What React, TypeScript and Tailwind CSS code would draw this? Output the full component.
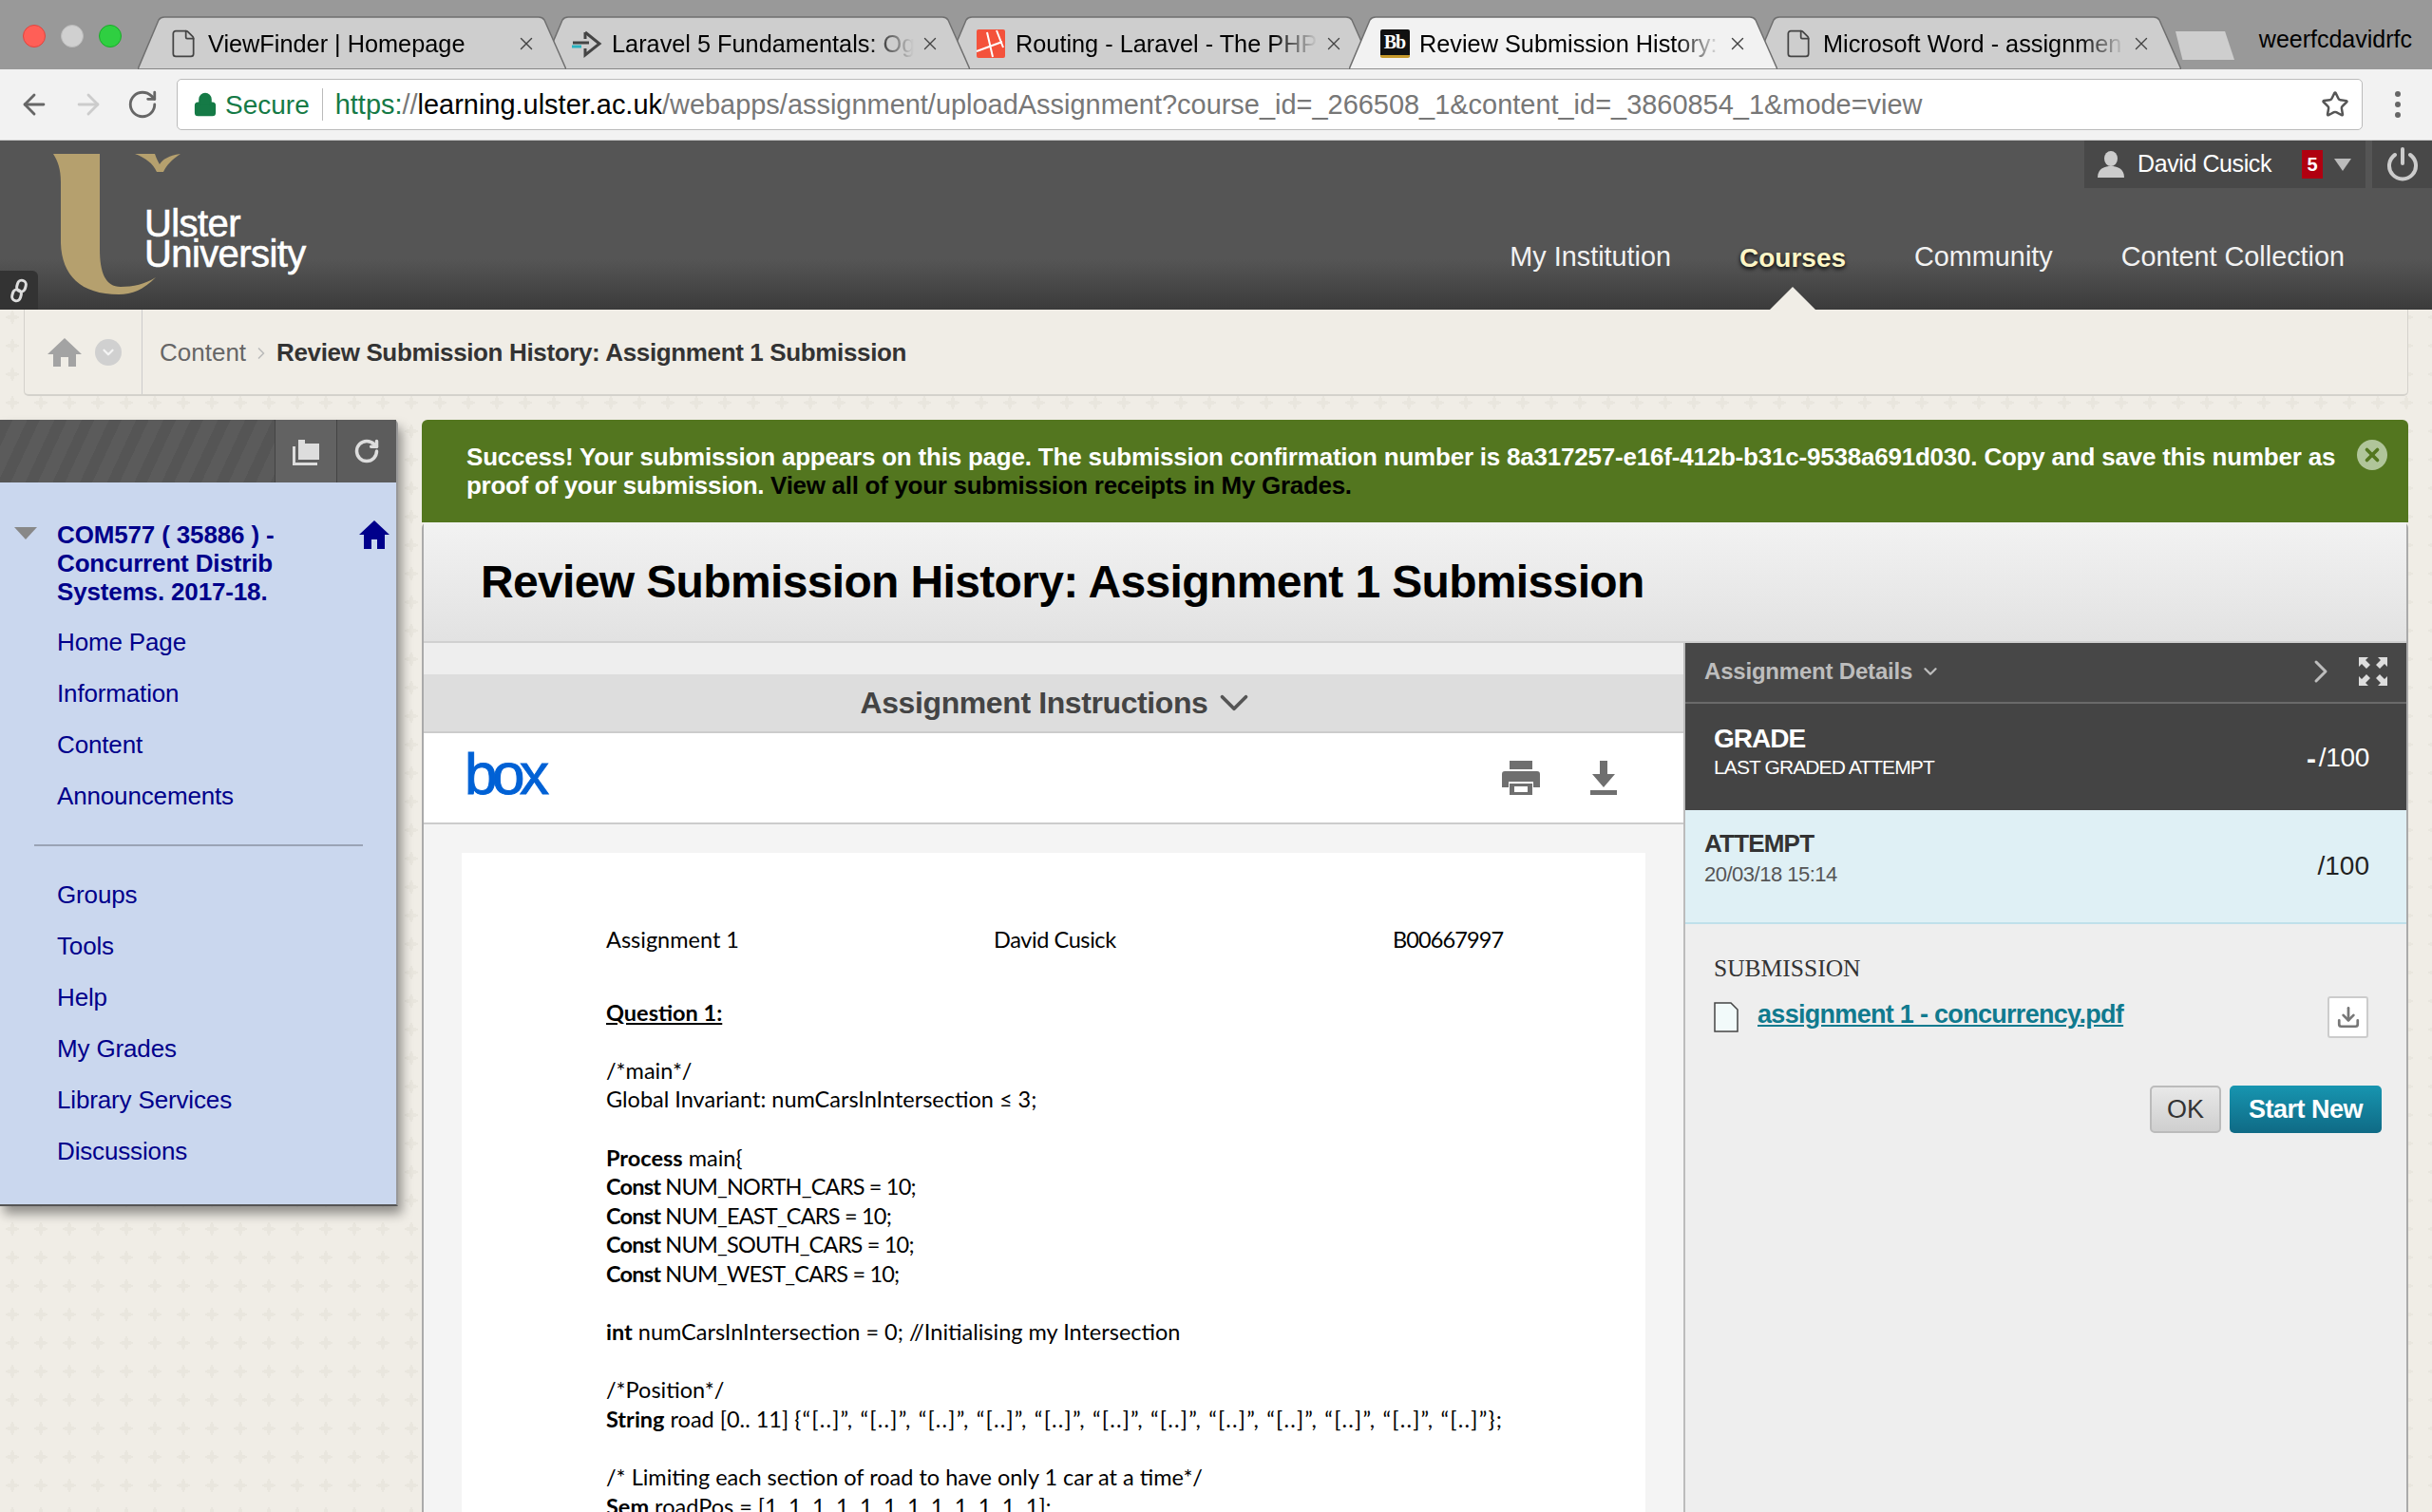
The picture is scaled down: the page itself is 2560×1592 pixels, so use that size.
import React from 'react';
import { ArrowLeft, ArrowRight, RotateCw, Star, File, X, ChevronDown, ChevronRight, Download, Lock } from 'lucide-react';

const TABS = [
  { title: 'ViewFinder | Homepage', z: 'z-40', icon: 'doc' },
  { title: 'Laravel 5 Fundamentals: Og', z: 'z-30', icon: 'lara' },
  { title: 'Routing - Laravel - The PHP', z: 'z-20', icon: 'laravel' },
  { title: 'Review Submission History:', z: 'z-50', icon: 'bb', active: true },
  { title: 'Microsoft Word - assignmen', z: 'z-10', icon: 'doc' },
];

const NAV_TOP = ['Home Page', 'Information', 'Content', 'Announcements'];
const NAV_BOTTOM = ['Groups', 'Tools', 'Help', 'My Grades', 'Library Services', 'Discussions'];
const NAV_MAIN = ['My Institution', 'Courses', 'Community', 'Content Collection'];

const TabIcon: React.FC<{ kind: string }> = ({ kind }) => {
  if (kind === 'doc') return <File size={32} strokeWidth={1.3} className="text-[#444]" />;
  if (kind === 'lara')
    return (
      <svg width="32" height="32" viewBox="0 0 32 32">
        <path d="M14 4 L29 16 L14 28 L14 21" fill="none" stroke="#444" strokeWidth="3" />
        <path d="M14 11 V4" stroke="#444" strokeWidth="3" />
        <path d="M1 15 H18" stroke="#444" strokeWidth="3" />
        <path d="M0 19 H10" stroke="#2bb3c0" strokeWidth="3" />
      </svg>
    );
  if (kind === 'laravel')
    return (
      <svg width="32" height="32" viewBox="0 0 32 32">
        <rect x="1" y="1" width="30" height="30" rx="2" fill="#f4523b" />
        <path d="M1 24 L28 14 M12 4 L18 30 M22 2 L29 20" stroke="#fff" strokeWidth="2" fill="none" />
      </svg>
    );
  return (
    <span className="flex h-[30px] w-[31px] items-center justify-center rounded-[2px] border-b-[3px] border-[#c79a2c] bg-[#111] font-['Liberation_Serif',serif] text-[20px] font-bold leading-none tracking-[-1px] text-white">
      Bb
    </span>
  );
};

const Tab: React.FC<{ title: string; z: string; icon: string; active?: boolean }> = ({ title, z, icon, active }) => (
  <div className={`relative -mr-[26px] h-[56px] w-[451px] shrink-0 ${z}`}>
    <svg className="absolute inset-0 h-full w-full" viewBox="0 0 451 56" preserveAspectRatio="none">
      <path
        d="M0 56 L22 4 Q24 1 28 1 L422 1 Q426 1 428 4 L451 56 Z"
        fill={active ? '#f2f2f2' : '#cecece'}
        stroke="#6f6f6f"
        strokeWidth="1.5"
      />
    </svg>
    <div className="relative flex h-full items-center pl-[32px] pr-[31px] pt-[1px]">
      <span className="flex w-[32px] shrink-0 justify-center"><TabIcon kind={icon} /></span>
      <span className="ml-[10px] flex-1 overflow-hidden whitespace-nowrap text-[25.3px] leading-[32px] text-black [mask-image:linear-gradient(to_right,black_85%,transparent)]">
        {title}
      </span>
      <X size={22} strokeWidth={1.5} className="ml-[6px] shrink-0 text-[#444]" />
    </div>
  </div>
);

const App: React.FC = () => {
  return (
    <div className="flex h-[1592px] w-full flex-col overflow-hidden bg-[#f0ede6] bg-[radial-gradient(7px_2px_at_center,#e9e6de_99%,transparent),radial-gradient(2px_7px_at_center,#e9e6de_99%,transparent)] font-['Liberation_Sans',Arial,sans-serif] [background-position:-2px_-11px] [background-size:30px_30px]">
      {/* Browser tab strip */}
      <div className="relative flex h-[73px] shrink-0 items-end bg-[#999] pl-[145px]">
        <div className="absolute left-[24px] top-[26px] flex gap-[16px]">
          <span className="h-[24px] w-[24px] rounded-full border border-[#e0443e] bg-[#ff5f57]" />
          <span className="h-[24px] w-[24px] rounded-full border border-[#bbb] bg-[#d0d0d0]" />
          <span className="h-[24px] w-[24px] rounded-full border border-[#1aab29] bg-[#2fcf41]" />
        </div>
        {TABS.map((t) => (
          <Tab key={t.title} {...t} />
        ))}
        <div className="z-0 mb-[10px] ml-[20px] h-[30px] w-[62px] shrink-0 [clip-path:polygon(0_0,84%_0,100%_100%,12%_100%)] bg-[#cecece]" />
        <span className="absolute right-[21px] top-[25px] text-[25px] leading-[32px] text-black">weerfcdavidrfc</span>
      </div>

      {/* Browser toolbar */}
      <div className="flex h-[75px] shrink-0 items-center border-b border-[#ccc] bg-[#f2f2f2]">
        <div className="flex w-[186px] items-center justify-around pl-[8px] pr-[8px]">
          <ArrowLeft size={34} strokeWidth={2} className="text-[#666]" />
          <ArrowRight size={34} strokeWidth={2} className="text-[#ccc]" />
          <RotateCw size={34} strokeWidth={2} className="text-[#666]" />
        </div>
        <div className="flex h-[54px] w-[2301px] items-center rounded-[5px] border border-[#bbb] bg-white pl-[16px] pr-[13px] text-[28px]">
          <Lock size={26} strokeWidth={2.5} fill="#157a46" className="text-[#157a46]" />
          <span className="ml-[8px] pt-[2px] text-[#157a46]">Secure</span>
          <span className="mx-[13px] h-[34px] w-px bg-[#bbb]" />
          <span className="whitespace-nowrap pt-[2px] text-[28.94px] text-[#777]">
            <span className="text-[#157a46]">https:</span>//<span className="text-black">learning.ulster.ac.uk</span>/webapps/assignment/uploadAssignment?course_id=_266508_1&amp;content_id=_3860854_1&amp;mode=view
          </span>
          <Star size={30} strokeWidth={2} className="ml-auto text-[#555]" />
        </div>
        <div className="ml-[34px] flex flex-col gap-[5px]">
          <span className="h-[6px] w-[6px] rounded-full bg-[#666]" />
          <span className="h-[6px] w-[6px] rounded-full bg-[#666]" />
          <span className="h-[6px] w-[6px] rounded-full bg-[#666]" />
        </div>
      </div>

      {/* Site header */}
      <div className="relative flex h-[178px] shrink-0 justify-between bg-[linear-gradient(#555_0%,#555_70%,#3b3b3b_100%)]">
        <div className="relative ml-[55px] mt-[14px] h-[148px] w-[270px]">
          <svg width="136" height="148" viewBox="0 0 136 148">
            <path d="M1 0 H50 L50 100 C50 125 56 140 72 140 C85 140 98 137 109 130 C96 143 84 148 70 148 C30 148 10 128 9 94 L9 30 C9 16 6 8 1 0 Z" fill="#b5a06e" />
            <path d="M87 0 H108 C110 6 112 9 113 11 C116 6 122 2 135 0 C126 6 120 12 117 19 H110 C106 10 98 4 87 0 Z" fill="#b5a06e" />
          </svg>
          <div className="absolute left-[97px] top-[57px] text-[40px] font-normal leading-[32px] tracking-[-0.6px] text-white [-webkit-text-stroke:0.6px_white]">
            Ulster
            <br />
            University
          </div>
        </div>
        <div className="absolute bottom-0 left-0 flex h-[41px] w-[40px] items-center justify-center rounded-tr-[6px] bg-[#333]">
          <svg width="20" height="26" viewBox="0 0 20 26" fill="none" stroke="#ddd" strokeWidth="3">
            <rect x="8" y="2" width="9" height="12" rx="4.5" transform="rotate(15 12 8)" />
            <rect x="3" y="12" width="9" height="12" rx="4.5" transform="rotate(15 8 18)" />
          </svg>
        </div>

        <div className="flex flex-col items-end">
          <div className="flex h-[50px] items-stretch gap-[7px]">
            <div className="flex w-[296px] items-center bg-[#484848] pl-[14px]">
              <svg width="28" height="28" viewBox="0 0 28 28" fill="#ccc">
                <ellipse cx="14" cy="8" rx="7" ry="8" />
                <path d="M0 28 C0 18 8 16 14 16 C20 16 28 18 28 28 Z" />
              </svg>
              <span className="ml-[14px] text-[25px] tracking-[-0.4px] text-white">David Cusick</span>
              <span className="ml-[32px] flex h-[30px] w-[22px] items-center justify-center bg-[#b00010] text-[20px] font-bold text-white">5</span>
              <span className="ml-[12px] h-0 w-0 border-x-[9px] border-t-[13px] border-x-transparent border-t-[#bbb]" />
            </div>
            <div className="flex w-[63px] items-center justify-center bg-[#484848]">
              <svg width="34" height="36" viewBox="0 0 34 36" fill="none" stroke="#ccc" strokeWidth="4" strokeLinecap="round">
                <path d="M17 2 V17" />
                <path d="M9 8 A14 14 0 1 0 25 8" />
              </svg>
            </div>
          </div>
          <nav className="mr-[92px] mt-[52px] flex h-[76px] items-start gap-[72px] text-[28.8px] leading-[40px]">
            {NAV_MAIN.map((item) =>
              item === 'Courses' ? (
                <div key={item} className="relative h-full">
                  <span className="block pt-[2px] text-[28px] font-bold text-[#fdf6c6] [text-shadow:0_2px_4px_#000]">{item}</span>
                  <span className="absolute bottom-0 left-1/2 h-0 w-0 -translate-x-1/2 border-x-[24px] border-b-[24px] border-x-transparent border-b-[#f0ede6]" />
                </div>
              ) : (
                <span key={item} className="text-[#f2f2f2]">{item}</span>
              ),
            )}
          </nav>
        </div>
      </div>

      {/* Breadcrumbs */}
      <div className="mx-[25px] flex h-[91px] shrink-0 items-stretch rounded-b-[5px] border-x border-b-2 border-[#d4d2cc] bg-[#f0ede6]">
        <div className="flex w-[124px] items-center gap-[14px] border-r border-[#ccc] pl-[24px]">
          <svg width="36" height="30" viewBox="0 0 36 30" fill="#a3a3a3">
            <path d="M18 0 L36 17 H30 V30 H22 V20 H14 V30 H6 V17 H0 Z" />
          </svg>
          <span className="flex h-[28px] w-[28px] items-center justify-center rounded-full bg-[#d0d0d0]">
            <ChevronDown size={18} strokeWidth={3} className="text-[#f4f4f4]" />
          </span>
        </div>
        <div className="flex items-center pl-[18px] pt-[2px] text-[26px]">
          <span className="text-[#666]">Content</span>
          <ChevronRight size={20} className="mx-[6px] text-[#bbb]" />
          <span className="font-bold tracking-[-0.36px] text-[#333]">Review Submission History: Assignment 1 Submission</span>
        </div>
      </div>

      <div className="mt-[25px] flex min-h-0 flex-1 items-start gap-[25px] pr-[25px]">
        {/* Course menu */}
        <aside className="w-[419px] shrink-0 rounded-tr-[5px] border-b-2 border-r-2 border-b-[#555] border-r-[#999] bg-[#cad7ee] text-[26px] tracking-[-0.15px] text-[#00008b] shadow-[4px_8px_12px_rgba(0,0,0,0.4)]">
          <div className="flex h-[66px] rounded-tr-[5px] bg-[#555]">
            <div className="flex-1 bg-[repeating-linear-gradient(115deg,#555_0,#555_12px,#5b5b5b_12px,#5b5b5b_26px)]" />
            <button className="flex w-[65px] items-center justify-center border-l border-[#444] bg-[#626262]">
              <svg width="32" height="30" viewBox="0 0 32 30" fill="#ddd">
                <path d="M8 3 H15 V7 H30 V24 H8 Z" />
                <path d="M2 10 H5 V27 H28 V30 H2 Z" />
              </svg>
            </button>
            <button className="flex w-[63px] items-center justify-center border-l border-[#444] bg-[#5c5c5c]">
              <RotateCw size={28} strokeWidth={3} className="text-[#ddd]" />
            </button>
          </div>
          <div className="relative pb-[29px] pl-[60px] pt-[40px]">
            <span className="absolute left-[15px] top-[47px] h-0 w-0 border-x-[12px] border-t-[13px] border-x-transparent border-t-[#888]" />
            <svg className="absolute right-[7px] top-[40px]" width="32" height="30" viewBox="0 0 32 30" fill="#00008b">
              <path d="M16 0 L32 15 H27 V30 H19 V20 H13 V30 H5 V15 H0 Z" />
            </svg>
            <h2 className="text-[26px] font-bold leading-[30px]">
              COM577 ( 35886 ) -<br />
              Concurrent Distrib<br />
              Systems. 2017-18.
            </h2>
            <ul className="mt-[11px]">
              {NAV_TOP.map((item) => (
                <li key={item} className="flex h-[54px] items-center">{item}</li>
              ))}
            </ul>
            <div className="-ml-[24px] mb-[24px] mr-[35px] mt-[24px] h-[2px] bg-[#9aa3b5]" />
            <ul>
              {NAV_BOTTOM.map((item) => (
                <li key={item} className="flex h-[54px] items-center">{item}</li>
              ))}
            </ul>
          </div>
        </aside>

        {/* Main content */}
        <main className="flex h-full min-w-0 flex-1 flex-col">
          <div className="relative h-[108px] shrink-0 rounded-t-[6px] bg-[#53761f] pl-[47px] pt-[24px] text-[26px] font-bold leading-[30px] tracking-[-0.21px] text-white">
            Success! Your submission appears on this page. The submission confirmation number is 8a317257-e16f-412b-b31c-9538a691d030. Copy and save this number as
            <br />
            <span className="tracking-[-0.3px]">proof of your submission. <span className="text-black">View all of your submission receipts in My Grades.</span></span>
            <span className="absolute right-[22px] top-[21px] flex h-[32px] w-[32px] items-center justify-center rounded-full bg-[#b0c59a]">
              <X size={22} strokeWidth={4} className="text-[#53761f]" />
            </span>
          </div>
          <div className="flex min-h-0 flex-1 flex-col rounded-t-[6px] border-x-2 border-[#aaa] bg-[#eee]">
            <div className="flex h-[127px] shrink-0 items-center border-b-2 border-[#d0d0d0] bg-[linear-gradient(#f2f2f2,#e2e2e2)] pl-[60px]">
              <h1 className="text-[48px] font-bold tracking-[-0.65px] text-black">Review Submission History: Assignment 1 Submission</h1>
            </div>
            <div className="flex min-h-0 flex-1">
              <section className="flex min-w-0 flex-1 flex-col bg-[#f4f4f4]">
                <div className="h-[33px] shrink-0 bg-[#eee]" />
                <div className="flex h-[62px] shrink-0 items-center justify-center gap-[3px] border-b-2 border-[#ccc] bg-[#ddd] pl-[12px] text-[32px] font-bold tracking-[-0.4px] text-[#444]">
                  Assignment Instructions
                  <ChevronDown size={50} strokeWidth={1.8} className="text-[#555]" />
                </div>
                <div className="flex h-[96px] shrink-0 items-center justify-between border-b-2 border-[#ccc] bg-white pl-[43px] pr-[69px]">
                  <span className="pb-[8px] text-[62px] leading-none tracking-[-5.5px] text-[#0061d5] [-webkit-text-stroke:1px_#0061d5]">box</span>
                  <div className="flex items-center gap-[52px]">
                    <svg width="40" height="36" viewBox="0 0 40 36" fill="#6f6f6f">
                      <rect x="8" y="0" width="24" height="9" />
                      <path d="M3 11 H37 Q40 11 40 14 V28 H33 V22 H7 V28 H0 V14 Q0 11 3 11 Z" />
                      <path d="M8 24 H32 V36 H8 Z M13 27 V33 H27 V27 Z" fillRule="evenodd" />
                    </svg>
                    <svg width="30" height="36" viewBox="0 0 30 36" fill="#6f6f6f">
                      <path d="M11 0 H19 V14 H27 L15 28 L3 14 H11 Z" />
                      <rect x="1" y="31" width="28" height="5" />
                    </svg>
                  </div>
                </div>
                <div className="mx-[40px] mt-[30px] min-h-0 flex-1 overflow-hidden bg-white pl-[152px] pt-[76px] font-['Lato',sans-serif] text-[23.5px] leading-[30.6px] text-black">
                  <div className="flex">
                    <span className="w-[408px]">Assignment 1</span>
                    <span className="w-[420px] tracking-[-0.4px]">David Cusick</span>
                    <span className="tracking-[-0.9px]">B00667997</span>
                  </div>
                  <p className="mt-[46px] font-bold underline">Question 1:</p>
                  <p className="mt-[30.6px]">/*main*/</p>
                  <p>Global Invariant: numCarsInIntersection ≤ 3;</p>
                  <p className="mt-[30.6px]"><b>Process</b> main{'{'}</p>
                  <p className="tracking-[-0.8px]"><b>Const</b> NUM_NORTH_CARS = 10;</p>
                  <p className="tracking-[-0.8px]"><b>Const</b> NUM_EAST_CARS = 10;</p>
                  <p className="tracking-[-0.8px]"><b>Const</b> NUM_SOUTH_CARS = 10;</p>
                  <p className="tracking-[-0.8px]"><b>Const</b> NUM_WEST_CARS = 10;</p>
                  <p className="mt-[30.6px]"><b>int</b> numCarsInIntersection = 0; //Initialising my Intersection</p>
                  <p className="mt-[30.6px]">/*Position*/</p>
                  <p><b>String</b> road [0.. 11] <span className="tracking-[1.2px]">{'{'}“[..]”, “[..]”, “[..]”, “[..]”, “[..]”, “[..]”, “[..]”, “[..]”, “[..]”, “[..]”, “[..]”, “[..]”{'}'};</span></p>
                  <p className="mt-[30.6px]">/* Limiting each section of road to have only 1 car at a time*/</p>
                  <p><b>Sem</b> roadPos = [1, 1, 1, 1, 1, 1, 1, 1, 1, 1, 1, 1];</p>
                </div>
              </section>

              {/* Assignment details */}
              <section className="w-[761px] shrink-0 border-l-2 border-[#bbb] bg-[#eee]">
                <div className="flex h-[64px] items-center border-b-2 border-[#6a6a6a] bg-[#474747] pb-[2px] pl-[20px] pr-[20px] text-[24px] font-bold tracking-[-0.2px] text-[#bdbdbd]">
                  Assignment Details
                  <ChevronDown size={22} strokeWidth={2.5} className="ml-[8px]" />
                  <ChevronRight size={40} strokeWidth={1.8} className="ml-auto mr-[20px]" />
                  <svg width="30" height="30" viewBox="0 0 30 30" fill="#ddd">
                    <path d="M0 0 H10 L7 3 L12 8 L8 12 L3 7 L0 10 Z" />
                    <path d="M30 0 H20 L23 3 L18 8 L22 12 L27 7 L30 10 Z" />
                    <path d="M0 30 H10 L7 27 L12 22 L8 18 L3 23 L0 20 Z" />
                    <path d="M30 30 H20 L23 27 L18 22 L22 18 L27 23 L30 20 Z" />
                  </svg>
                </div>
                <div className="flex h-[112px] items-center justify-between bg-[#444] pl-[30px] pr-[39px] text-white">
                  <div className="-mt-[12px]">
                    <div className="text-[28px] font-bold leading-[34px] tracking-[-1px]">GRADE</div>
                    <div className="text-[21px] leading-[26px] tracking-[-0.9px]">LAST GRADED ATTEMPT</div>
                  </div>
                  <div className="flex items-center pt-[2px] text-[28px] tracking-[-0.3px]"><b className="text-[30px]">-</b><span className="ml-[3px]">/100</span></div>
                </div>
                <div className="flex h-[120px] items-start justify-between border-b-2 border-[#bfe0ea] bg-[#dff0f5] pl-[20px] pr-[39px] pt-[20px]">
                  <div>
                    <div className="text-[26px] font-bold leading-[30px] tracking-[-0.8px] text-[#333]">ATTEMPT</div>
                    <div className="mt-[4px] text-[22px] leading-[28px] tracking-[-0.5px] text-[#555]">20/03/18 15:14</div>
                  </div>
                  <div className="mt-[23px] text-[28px] leading-[32px] text-[#222]">/100</div>
                </div>
                <div className="pl-[30px] pr-[40px] pt-[32px]">
                  <div className="font-['Liberation_Serif',serif] text-[25.5px] leading-[30px] text-[#333]">SUBMISSION</div>
                  <div className="mt-[14px] flex items-center">
                    <svg width="26" height="32" viewBox="0 0 26 32">
                      <path d="M1 1 H18 L25 8 V31 H1 Z" fill="#f2fafa" stroke="#444" strokeWidth="1.5" />
                    </svg>
                    <span className="-mt-[6px] ml-[20px] text-[27px] font-bold tracking-[-0.7px] text-[#107a8e] underline">assignment 1 - concurrency.pdf</span>
                    <span className="ml-auto flex h-[44px] w-[43px] items-center justify-center rounded-[3px] border-2 border-[#ccc] bg-white">
                      <Download size={26} strokeWidth={2.5} className="text-[#777]" />
                    </span>
                  </div>
                  <div className="-mr-[14px] mt-[50px] flex justify-end gap-[9px]">
                    <button className="h-[50px] w-[75px] rounded-[5px] border-2 border-[#bbb] bg-[linear-gradient(#e8e8e8,#cfcfcf)] text-[27px] text-[#333]">OK</button>
                    <button className="h-[50px] w-[160px] rounded-[5px] bg-[linear-gradient(#1795b0,#0f6a85)] text-[27px] font-bold tracking-[-0.5px] text-white">Start New</button>
                  </div>
                </div>
              </section>
            </div>
          </div>
        </main>
      </div>
    </div>
  );
};

export default App;
